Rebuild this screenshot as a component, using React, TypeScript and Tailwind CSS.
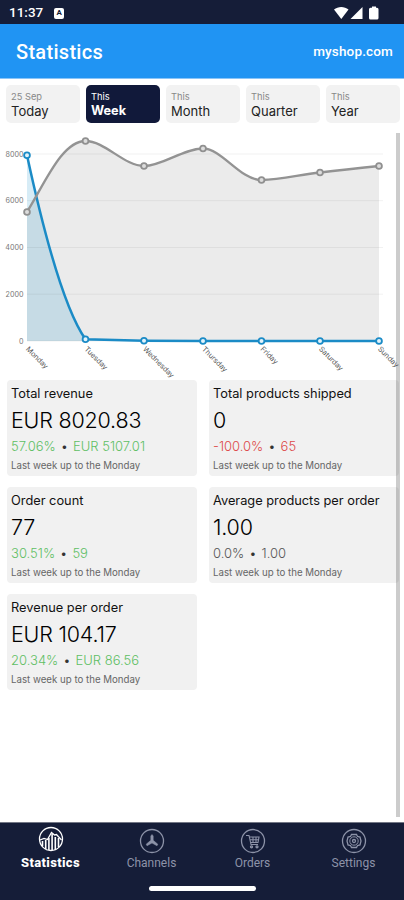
import { clsx } from 'clsx';

const periods = [
  { top: '25 Sep', label: 'Today' },
  { top: 'This', label: 'Week', active: true },
  { top: 'This', label: 'Month' },
  { top: 'This', label: 'Quarter' },
  { top: 'This', label: 'Year' },
];

const stats = [
  { title: 'Total revenue', value: 'EUR 8020.83', change: '57.06%', previous: 'EUR 5107.01', color: 'text-[#5fbf64]' },
  { title: 'Total products shipped', value: '0', change: '-100.0%', previous: '65', color: 'text-[#dd4848]' },
  { title: 'Order count', value: '77', change: '30.51%', previous: '59', color: 'text-[#5fbf64]' },
  { title: 'Average products per order', value: '1.00', change: '0.0%', previous: '1.00', color: 'text-[#555]' },
  { title: 'Revenue per order', value: 'EUR 104.17', change: '20.34%', previous: 'EUR 86.56', color: 'text-[#5fbf64]' },
];

const days = ['Monday', 'Tuesday', 'Wednesday', 'Thursday', 'Friday', 'Saturday', 'Sunday'];
const dayX = [27, 85.5, 144, 203, 261.5, 320, 379];
const previousY = [82, 11, 36, 18.5, 50, 42.5, 36];
const currentY = [25.2, 209.3, 210.7, 211, 211, 211, 211];
const ticks = [
  { label: '8000', y: 24 },
  { label: '6000', y: 70.7 },
  { label: '4000', y: 117.5 },
  { label: '2000', y: 164.2 },
  { label: '0', y: 211 },
];

const previousLine =
  'M27 82 C45 53 62 11 85.5 11 C105 11 124 36 144 36 C163 36 183 18.5 203 18.5 C222 18.5 240 50 261.5 50 C281 50 300 44.5 320 42.5 C340 40 359 38 379 36';
const currentLine = 'M27 25.2 C38 76 60 173 85.5 209.3 L144 210.7 L203 211 H379';

function StatusBar() {
  return (
    <div className="flex h-6 items-center justify-between bg-[#151d38] pl-[9px] pr-[25px] pt-[2px] text-white">
      <div className="flex items-center gap-[11px]">
        <span className="text-[13.5px] font-medium leading-none">11:37</span>
        <span className="flex h-[11px] w-[10px] items-center justify-center rounded-[2px] bg-white text-[8px] font-bold leading-none text-[#151d38]">
          A
        </span>
      </div>
      <svg width="46" height="16" viewBox="0 0 46 16" fill="currentColor">
        <path d="M1 4.6 C5 1 11.5 1 15.5 4.6 L8.3 14 Z" />
        <path d="M29.5 2 V14 H17.5 Z" />
        <path d="M37.5 2.8 H39 V1.5 H43 V2.8 H44 Q45.5 2.8 45.5 4.3 V13 Q45.5 14.5 44 14.5 H37.5 Q36 14.5 36 13 V4.3 Q36 2.8 37.5 2.8 Z" />
      </svg>
    </div>
  );
}

function RevenueChart() {
  return (
    <svg className="block overflow-visible" width="396" height="248" viewBox="0 0 396 248">
      <path d={`${previousLine} V211 H27 Z`} fill="#ebebeb" />
      <path d={`${currentLine} H27 Z`} fill="#118cc8" fillOpacity="0.17" />
      {ticks.map((tick) => (
        <g key={tick.label}>
          <line x1="27" x2="383" y1={tick.y} y2={tick.y} stroke="#000" strokeOpacity="0.055" />
          <text x="23.5" y={tick.y + 2.5} textAnchor="end" fontSize="7.2" fill="#777">
            {tick.label}
          </text>
        </g>
      ))}
      {days.map((day, i) => (
        <text key={day} transform={`translate(${dayX[i] - 1.5} 219.5) rotate(45)`} fontSize="7.3" fill="#555">
          {day}
        </text>
      ))}
      <path d={currentLine} fill="none" stroke="#1b8bc6" strokeWidth="2.5" />
      <path d={previousLine} fill="none" stroke="#939393" strokeWidth="2.3" />
      {dayX.map((x, i) => (
        <g key={x} strokeWidth="1.8">
          <circle cx={x} cy={previousY[i]} r="2.9" fill="#ddd" stroke="#909090" />
          <circle cx={x} cy={currentY[i]} r="2.9" fill="#e2f3fb" stroke="#1b8bc6" />
        </g>
      ))}
    </svg>
  );
}

function StatCard({ stat }: { stat: (typeof stats)[number] }) {
  return (
    <div className="h-24 whitespace-nowrap rounded-[4px] bg-[#f1f1f1] pl-[4px] pt-[6px]">
      <div className="text-[12.8px] leading-4 text-[#111]">{stat.title}</div>
      <div className="mt-[4px] text-[21.5px] font-light leading-7 tracking-[-0.2px] text-black">{stat.value}</div>
      <div className={clsx('mt-[4px] flex gap-[5px] text-[13px] font-light leading-4', stat.color)}>
        <span>{stat.change}</span>
        <span className="text-[#333]">•</span>
        <span>{stat.previous}</span>
      </div>
      <div className="mt-[6px] text-[9.7px] leading-3 text-[#666]">Last week up to the Monday</div>
    </div>
  );
}

function NavIcon({ name }: { name: string }) {
  return (
    <svg width="26" height="26" viewBox="0 0 26 26" fill="none" stroke="currentColor" strokeWidth="1.3">
      <circle cx="13" cy="13" r="11.5" />
      {name === 'Statistics' && (
        <>
          <path d="M2 14 L6 12.5 L9.5 13.5 L13.5 6.5 L16.5 9 L18.5 8.5 L23.5 14" />
          <path d="M4.5 15 V20 M7.7 14 V23 M10.9 12 V24 M14.1 8 V24 M17.3 11 V24 M20.5 12 V21" strokeWidth="1.6" />
        </>
      )}
      {name === 'Channels' && (
        <path
          d="M13 6.5 L14.2 8 V12.3 L18.8 16.2 L18 17.8 L13 15 L8 17.8 L7.2 16.2 L11.8 12.3 V8 Z"
          fill="currentColor"
          strokeWidth="0.5"
        />
      )}
      {name === 'Orders' && (
        <>
          <path d="M6 7.5 H9 L11 16.5 H18 M9.5 9 H19 L18 14.5 H10.5 M10 11.8 H18.5 M13 9 V14 M16 9 V14" strokeWidth="1.1" />
          <circle cx="11.5" cy="18.8" r="1" />
          <circle cx="17" cy="18.8" r="1" />
        </>
      )}
      {name === 'Settings' && (
        <>
          <path d="M10.5 6.5 H15.5 L16.5 8.5 L19 9 L20 13 L19 17 L16.5 17.5 L15.5 19.5 H10.5 L9.5 17.5 L7 17 L6 13 L7 9 L9.5 8.5 Z" />
          <circle cx="13" cy="13" r="4.2" strokeWidth="1" />
          <circle cx="13" cy="13" r="1.5" />
        </>
      )}
    </svg>
  );
}

function BottomNav() {
  return (
    <nav className="h-[78px] border-t border-[#737785] bg-[#151d38] font-[Roboto,sans-serif]">
      <div className="grid h-[62px] grid-cols-4">
        {['Statistics', 'Channels', 'Orders', 'Settings'].map((name, i) => (
          <div
            key={name}
            className={clsx(
              'flex flex-col items-center leading-4',
              i === 0
                ? 'gap-[3px] pt-[3px] text-[13px] font-extrabold tracking-[0.35px] text-white'
                : 'gap-[1px] pt-[5px] text-[12px] text-[#8d93a8]',
            )}
          >
            <NavIcon name={name} />
            <span>{name}</span>
          </div>
        ))}
      </div>
      <div className="mx-auto mt-[1px] h-[5px] w-[107px] rounded-full bg-white" />
    </nav>
  );
}

export default function App() {
  return (
    <div className="flex h-[900px] w-[404px] flex-col overflow-hidden bg-white font-[Inter,sans-serif]">
      <div className="font-[Roboto,sans-serif]">
        <StatusBar />
        <header className="flex h-[55px] items-center justify-between border-b border-[#8ac5f8] bg-[#2094f3] pl-4 pr-[11px] text-white">
          <h1 className="pt-[2px] text-[20px] font-medium tracking-[0.3px]">Statistics</h1>
          <span className="text-[13.5px] font-medium tracking-[0.15px]">myshop.com</span>
        </header>
      </div>

      <div className="grid grid-cols-5 gap-[6px] pl-[6px] pr-[4px] pt-[6px]">
        {periods.map((period) => (
          <button
            key={period.label}
            className={clsx(
              'flex h-[38px] flex-col items-start rounded-[5px] pl-[5px] pt-[6px]',
              period.active ? 'bg-[#11193a] text-white' : 'bg-[#f2f2f2] text-[#222]',
            )}
          >
            <span className={clsx('text-[9.3px] leading-3', !period.active && 'text-[#888]')}>{period.top}</span>
            <span className={clsx('leading-4', period.active ? 'text-[12.7px] font-bold' : 'text-[13px]')}>
              {period.label}
            </span>
          </button>
        ))}
      </div>

      <main className="mt-[7px] flex min-h-0 flex-1">
        <div className="w-[396px] shrink-0">
          <RevenueChart />
          <div className="mt-[2px] grid grid-cols-[190px_190px] gap-x-3 gap-y-[11px] pl-[7px]">
            {stats.map((stat) => (
              <StatCard key={stat.title} stat={stat} />
            ))}
          </div>
        </div>
        {/* scrollbar */}
        <div className="mb-[5px] mt-[3px] w-[4px] bg-black/20" />
      </main>

      <BottomNav />
    </div>
  );
}
